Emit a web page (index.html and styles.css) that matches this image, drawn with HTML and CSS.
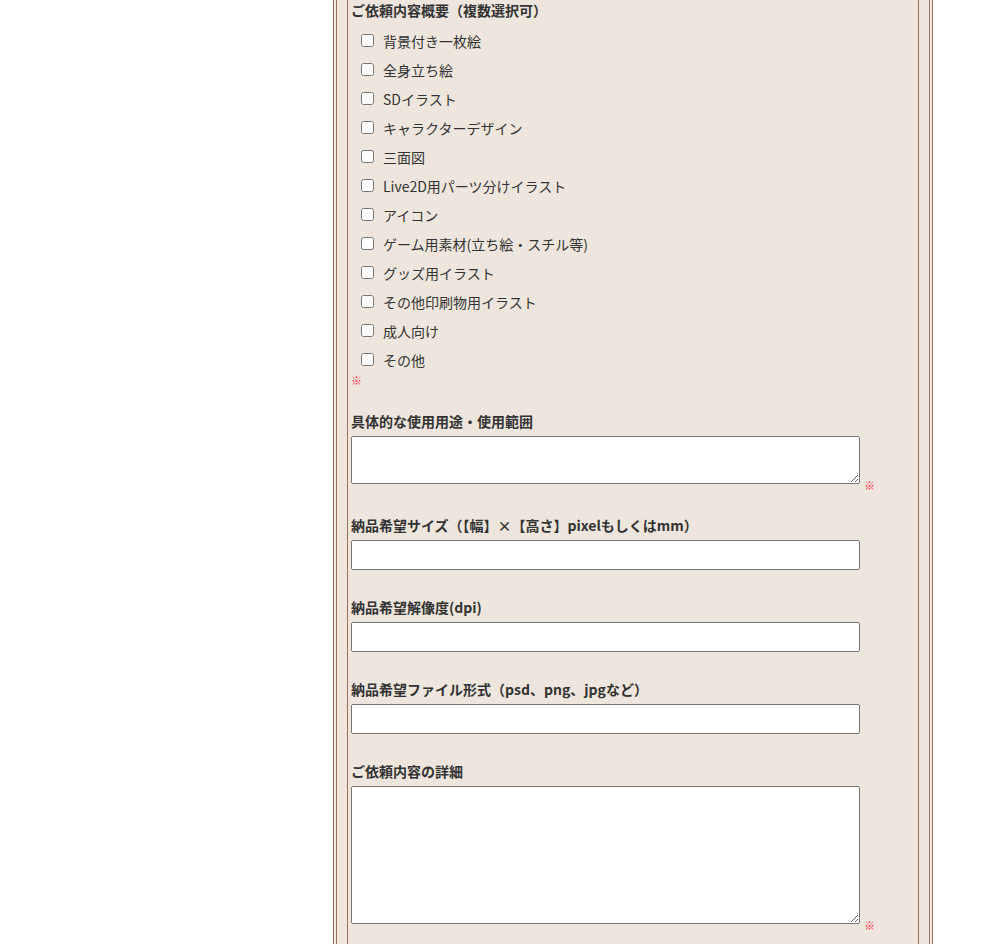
FILE: index.html
```html
<!DOCTYPE html>
<html lang="ja">
<head>
<meta charset="utf-8">
<title>ご依頼フォーム</title>
<link rel="stylesheet" href="styles.css">
</head>
<body>
<div class="frame-outer">
  <div class="frame-mid">
    <div class="frame-inner">
      <div class="field field-checks">
        <div class="label">ご依頼内容概要（複数選択可）</div>
        <ul class="checks">
          <li><input type="checkbox"><span>背景付き一枚絵</span></li>
          <li><input type="checkbox"><span>全身立ち絵</span></li>
          <li><input type="checkbox"><span>SDイラスト</span></li>
          <li><input type="checkbox"><span>キャラクターデザイン</span></li>
          <li><input type="checkbox"><span>三面図</span></li>
          <li><input type="checkbox"><span>Live2D用パーツ分けイラスト</span></li>
          <li><input type="checkbox"><span>アイコン</span></li>
          <li><input type="checkbox"><span>ゲーム用素材(立ち絵・スチル等)</span></li>
          <li><input type="checkbox"><span>グッズ用イラスト</span></li>
          <li><input type="checkbox"><span>その他印刷物用イラスト</span></li>
          <li><input type="checkbox"><span>成人向け</span></li>
          <li><input type="checkbox"><span>その他</span></li>
        </ul>
        <div class="req req-block">※</div>
      </div>

      <div class="field field-area">
        <div class="label">具体的な使用用途・使用範囲</div>
        <div class="row">
          <textarea class="area area-small"></textarea>
          <span class="req req-side">※</span>
        </div>
      </div>

      <div class="field">
        <div class="label">納品希望サイズ（【幅】×【高さ】pixelもしくはmm）</div>
        <div class="row"><input type="text" class="text"></div>
      </div>

      <div class="field">
        <div class="label">納品希望解像度(dpi)</div>
        <div class="row"><input type="text" class="text"></div>
      </div>

      <div class="field">
        <div class="label">納品希望ファイル形式（psd、png、jpgなど）</div>
        <div class="row"><input type="text" class="text"></div>
      </div>

      <div class="field field-area">
        <div class="label">ご依頼内容の詳細</div>
        <div class="row">
          <textarea class="area area-large"></textarea>
          <span class="req req-side">※</span>
        </div>
      </div>
    </div>
  </div>
</div>
</body>
</html>
```

FILE: styles.css
```css
html, body {
  margin: 0;
  padding: 0;
  background: #ffffff;
}

body {
  font-family: "Noto Sans CJK JP", "Noto Sans", sans-serif;
  font-size: 14px;
  color: #333333;
}

.frame-outer {
  width: 600px;
  box-sizing: border-box;
  margin: -18px 0 0 333px;
  border: 1px solid #9a7060;
  padding: 2px;
  background: #eee6dc;
}

.frame-mid {
  border: 1px solid #9a7060;
  padding: 10px;
}

.frame-inner {
  border: 1px solid #9a7060;
  padding: 3px 3px 60px 3px;
}

.label {
  font-weight: bold;
  font-size: 14px;
  line-height: 20px;
  height: 20px;
  color: #333333;
  margin-bottom: 5px;
  white-space: nowrap;
}

.field {
  margin-bottom: 27px;
}

.field-checks {
  margin-bottom: 25px;
}

.field-checks .label {
  margin-bottom: 0;
}

.checks {
  list-style: none;
  margin: 6px 0 0 0;
  padding: 0;
}

.checks li {
  display: flex;
  align-items: center;
  height: 29px;
  padding-left: 10px;
}

.checks input {
  margin: 0;
  width: 13px;
  height: 13px;
}

.checks span {
  margin-left: 9px;
  font-size: 14px;
  line-height: 20px;
  color: #333333;
}

.req {
  color: #ff3355;
  font-size: 11px;
  font-weight: bold;
  line-height: 12px;
}

.req-block {
  height: 12px;
  margin-top: 0;
  margin-bottom: 1px;
}

.row {
  display: flex;
  align-items: flex-end;
}

.field-area .row {
  padding-bottom: 4px;
}

.req-side {
  margin-left: 4px;
  margin-bottom: -7px;
}

.text {
  width: 509px;
  height: 30px;
  box-sizing: border-box;
  margin: 0;
  font-size: 14px;
}

.area {
  width: 509px;
  box-sizing: border-box;
  margin: 0;
  display: block;
  font-size: 14px;
}

.area-small {
  height: 48px;
}

.area-large {
  height: 138px;
}
```
